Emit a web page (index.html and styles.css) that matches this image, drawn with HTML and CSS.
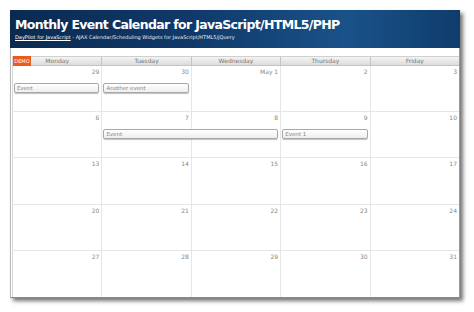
FILE: index.html
```html
<!DOCTYPE html>
<html>
<head>
<meta charset="utf-8">
<link rel="stylesheet" href="styles.css">
</head>
<body>
<div class="window">
  <div class="header">
    <h1 class="title">Monthly Event Calendar for JavaScript/HTML5/PHP</h1>
    <div class="sub"><a class="sub-link">DayPilot for JavaScript</a> - AJAX Calendar/Scheduling Widgets for JavaScript/HTML5/jQuery</div>
  </div>
  <div class="main">
    <div class="cal">
      <div class="cal-head">
        <div class="hcell first"><span class="demo">DEMO</span>Monday</div>
        <div class="hcell">Tuesday</div>
        <div class="hcell">Wednesday</div>
        <div class="hcell">Thursday</div>
        <div class="hcell">Friday</div>
      </div>
      <div class="week">
        <div class="day c1">29</div><div class="day c2">30</div><div class="day c3">May 1</div><div class="day c4">2</div><div class="day c5">3</div>
        <div class="event c1">Event</div>
        <div class="event c2">Another event</div>
      </div>
      <div class="week">
        <div class="day c1">6</div><div class="day c2">7</div><div class="day c3">8</div><div class="day c4">9</div><div class="day c5">10</div>
        <div class="event span2 c2">Event</div>
        <div class="event c4">Event 1</div>
      </div>
      <div class="week">
        <div class="day c1">13</div><div class="day c2">14</div><div class="day c3">15</div><div class="day c4">16</div><div class="day c5">17</div>
      </div>
      <div class="week">
        <div class="day c1">20</div><div class="day c2">21</div><div class="day c3">22</div><div class="day c4">23</div><div class="day c5">24</div>
      </div>
      <div class="week">
        <div class="day c1">27</div><div class="day c2">28</div><div class="day c3">29</div><div class="day c4">30</div><div class="day c5">31</div>
      </div>
    </div>
  </div>
</div>
</body>
</html>
```
FILE: styles.css
```css
html, body {
  margin: 0;
  padding: 0;
  background: #ffffff;
}
body {
  font-family: "DejaVu Sans", Verdana, sans-serif;
  width: 474px;
  height: 312px;
  overflow: hidden;
}
.window {
  margin: 10px 0 0 10px;
  width: 450px;
  height: 288px;
  box-sizing: border-box;
  border-left: 1px solid #b8b8b8;
  border-right: 1px solid #9a9a9a;
  border-bottom: 1px solid #8a8a8a;
  background: #fff;
  box-shadow: 3px 3px 4px rgba(0,0,0,0.55);
  display: flex;
  flex-direction: column;
}
.header {
  height: 38px;
  box-sizing: border-box;
  margin: 0 -1px;
  padding: 8px 0 0 5px;
  background: linear-gradient(to right, #0a2a50 0%, #10396a 40%, #195289 75%, #0f3c6c 100%);
  color: #fff;
}
.title {
  margin: 0;
  font-size: 12.5px;
  font-weight: bold;
  line-height: 14px;
  letter-spacing: -0.65px;
  white-space: nowrap;
}
.sub {
  margin-top: 2px;
  font-size: 5px;
  line-height: 6px;
  white-space: nowrap;
  color: #e8eef6;
}
.sub-link {
  color: #fff;
  text-decoration: underline;
}
.main {
  flex: 1;
  padding: 8px 0 0 1px;
  display: flex;
}
.cal {
  flex: 1;
  display: grid;
  grid-template-rows: 10px repeat(5, 1fr);
  font-size: 6px;
  color: #888;
}
.cal-head {
  display: grid;
  grid-template-columns: repeat(5, 1fr);
  background: linear-gradient(#f4f4f4, #dcdcdc);
  border-top: 1px solid #d0d0d0;
  border-bottom: 1px solid #c4c4c4;
}
.hcell {
  position: relative;
  text-align: center;
  line-height: 8px;
  color: #777;
  border-left: 1px solid #c4c4c4;
}
.hcell.first {
  border-left: 1px solid #d4d4d4;
}
.demo {
  position: absolute;
  left: 0;
  top: -1px;
  width: 18px;
  height: 10px;
  background: #ec5a1e;
  color: #fff;
  font-size: 5px;
  line-height: 10px;
  text-align: center;
}
.week {
  display: grid;
  grid-template-columns: repeat(5, 1fr);
  grid-template-rows: 17px 10px 1fr;
  border-bottom: 1px solid #e6e6e6;
}
.week:last-child {
  border-bottom: none;
}
.day {
  grid-row: 1 / -1;
  text-align: right;
  padding: 2px 2px 0 0;
  line-height: 7px;
  color: #888;
  border-left: 1px solid #e6e6e6;
}
.day.c1 { border-left: 1px solid #d8d8d8; }
.c1 { grid-column: 1; }
.c2 { grid-column: 2; }
.c3 { grid-column: 3; }
.c4 { grid-column: 4; }
.c5 { grid-column: 5; }
.event {
  grid-row: 2;
  margin: 0 2px 0 2px;
  box-sizing: border-box;
  border: 1px solid #a8a8a8;
  border-radius: 2px;
  background: linear-gradient(#ffffff, #eeeeee);
  box-shadow: 0 1px 1px rgba(0,0,0,0.25);
  padding-left: 2px;
  line-height: 8px;
  font-size: 5.5px;
  color: #888;
  white-space: nowrap;
  overflow: hidden;
}
.event.span2 {
  grid-column: 2 / span 2;
}
```
